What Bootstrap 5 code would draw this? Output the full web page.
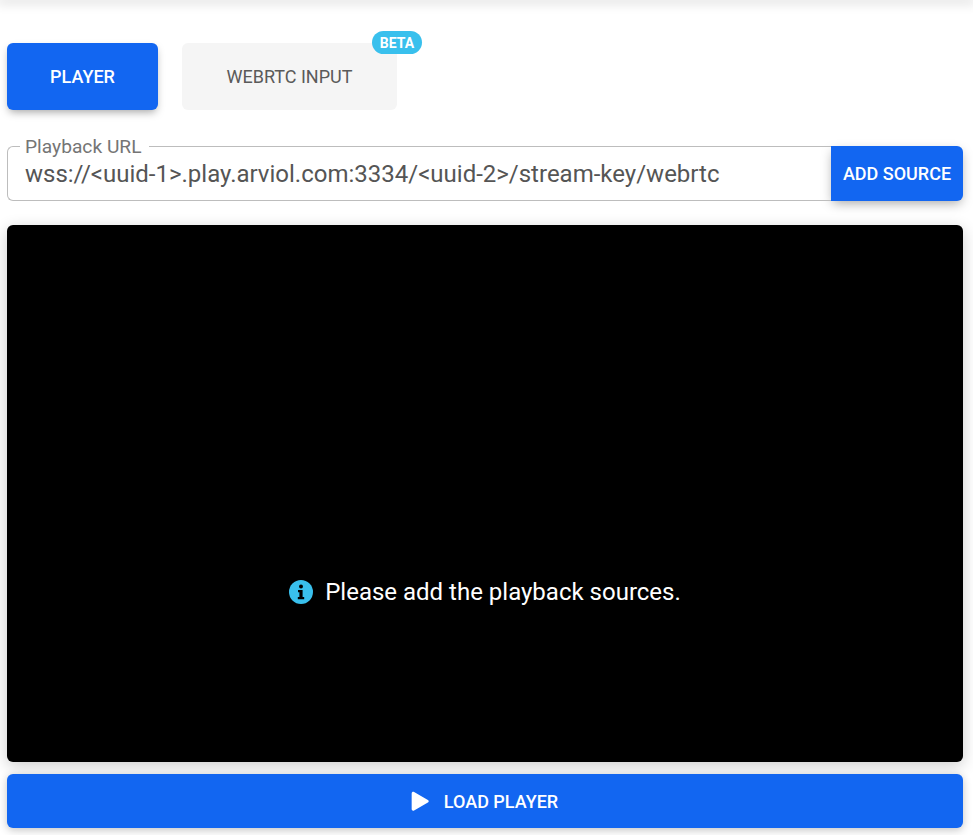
<!DOCTYPE html>
<html lang="en"><head><meta charset="utf-8"><title>Player</title>
<link href="https://cdn.jsdelivr.net/npm/bootstrap@5.3.0/dist/css/bootstrap.min.css" rel="stylesheet">
<style>
html,body{height:835px;overflow:hidden}
body{font-family:Roboto,"Liberation Sans",sans-serif;background:#fff;color:#4f4f4f;position:relative}
.top-shade{height:0;box-shadow:0 0 12px 3px rgba(0,0,0,.16)}
.page-wrap{padding:43px 10px 0 7px}
.tab-btn{height:67px;border:0;border-radius:6px;font-size:18px;font-weight:500;line-height:20px;padding:0}
.tab-player{width:151px;background:#1266f1;color:#fff;box-shadow:0 4px 9px -2px rgba(0,0,0,.36)}
.tab-webrtc{width:215px;background:#f5f5f5;color:#5a5a5a;font-weight:400}
.tabs-row{gap:24px}
.beta-pill{position:absolute;top:-12px;right:-25px;width:50px;height:23px;border-radius:12px;background:#39c0ed;color:#fff;font-size:14px;font-weight:700;line-height:24px;text-align:center}
.url-row{margin-top:36px;height:55px}
.url-box{border:1px solid #bdbdbd;border-right:0;border-radius:6px 0 0 6px;padding:0 17px}
.url-label{position:absolute;left:12px;top:-11px;background:#fff;padding:0 8px 0 5px;font-size:19.2px;line-height:22px;color:#757575}
.url-input{border:0;outline:0;width:100%;font-family:inherit;font-size:24px;line-height:30px;color:#555;padding:0;background:transparent}
.add-btn{width:132px;border:0;border-radius:0 6px 6px 0;background:#1266f1;color:#fff;font-size:18px;font-weight:500;padding:0;box-shadow:0 4px 12px -2px rgba(0,0,0,.36)}
.video-pane{margin-top:24px;height:537px;background:#000;border-radius:6px;color:#fff;font-size:24px;padding-top:196px;box-shadow:0 4px 16px 0 rgba(0,0,0,.2)}
.load-btn{margin-top:12px;height:54px;width:100%;border:0;border-radius:6px;background:#1266f1;color:#fff;font-size:18px;font-weight:500;gap:14px;padding:0;box-shadow:0 2px 9px 0 rgba(0,0,0,.24)}
.load-btn svg{margin-left:-2px}
</style></head>
<body>
<div class="top-shade"></div>
<div class="page-wrap">
  <div class="d-flex tabs-row">
    <button class="tab-btn tab-player" type="button">PLAYER</button>
    <button class="tab-btn tab-webrtc position-relative" type="button">WEBRTC INPUT<span class="beta-pill">BETA</span></button>
  </div>
  <div class="d-flex url-row">
    <div class="url-box flex-grow-1 position-relative d-flex">
      <label class="url-label" for="u">Playback URL</label>
      <input id="u" class="url-input" type="text" value="wss://&lt;uuid-1&gt;.play.arviol.com:3334/&lt;uuid-2&gt;/stream-key/webrtc">
    </div>
    <button class="add-btn" type="button">ADD SOURCE</button>
  </div>
  <div class="video-pane d-flex align-items-center justify-content-center gap-2">
    <svg width="24" height="24" viewBox="0 0 24 24" class="me-1" aria-hidden="true"><circle cx="12" cy="12" r="12" fill="#39c0ed"/><circle cx="12" cy="6.6" r="2" fill="#000"/><path d="M9 10h4.600v7h1.600v2.200H8.800V17h1.600v-4.800H9z" fill="#000"/></svg>
    <span>Please add the playback sources.</span>
  </div>
  <button class="load-btn d-flex align-items-center justify-content-center" type="button">
    <svg width="20" height="20" viewBox="0 0 18 18" aria-hidden="true"><path d="M1.500 2.200C1.500 1 2.700.4 3.700 1l12.400 7c1 .5 1 1.900 0 2.400L3.700 17.500c-1 .6-2.200 0-2.200-1.200z" fill="#fff"/></svg>
    <span>LOAD PLAYER</span>
  </button>
</div>
</body></html>
